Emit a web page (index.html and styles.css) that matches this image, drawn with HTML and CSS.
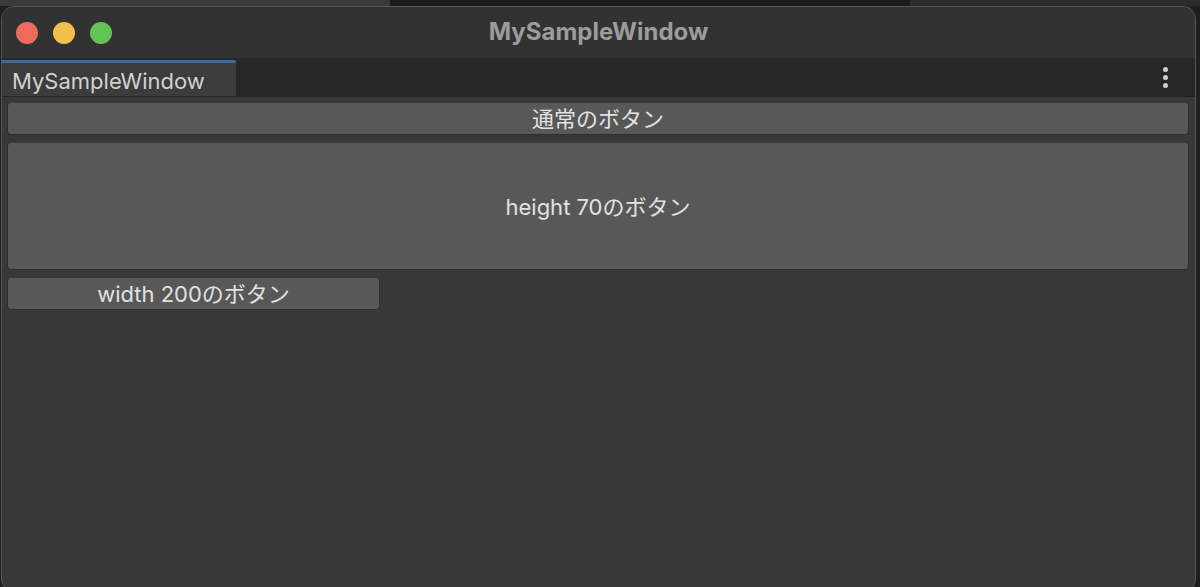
FILE: index.html
```html
<!DOCTYPE html>
<html lang="ja">
<head>
<meta charset="utf-8">
<title>MySampleWindow</title>
<link rel="stylesheet" href="styles.css">
</head>
<body>
<div class="backdrop">
  <div class="bg-strip"></div>
</div>
<div class="window">
  <div class="titlebar">
    <div class="lights">
      <span class="light red"></span>
      <span class="light yellow"></span>
      <span class="light green"></span>
    </div>
    <div class="title">MySampleWindow</div>
  </div>
  <div class="tabbar">
    <div class="tab">MySampleWindow</div>
    <div class="menu"><span></span><span></span><span></span></div>
  </div>
  <div class="content">
    <div class="btn">通常のボタン</div>
    <div class="btn tall">height 70のボタン</div>
    <div class="btn narrow">width 200のボタン</div>
  </div>
</div>
</body>
</html>
```
FILE: styles.css
```css
html, body {
  margin: 0;
  padding: 0;
  width: 1200px;
  height: 587px;
  overflow: hidden;
  background: #1f1f1f;
  font-family: "Inter", "Noto Sans CJK JP", sans-serif;
}
.backdrop {
  position: absolute;
  left: 0;
  top: 0;
  width: 1200px;
  height: 587px;
}
.bg-strip {
  height: 6px;
  background: linear-gradient(90deg, #3a3a3a 0 390px, #1c1c1c 390px 910px, #2c2c2c 910px);
}
.window {
  position: relative;
  margin-left: 1px;
  margin-top: 6px;
  width: 1193px;
  height: 584px;
  border: 1px solid #565656;
  border-radius: 13px;
  overflow: hidden;
  background: #383838;
  display: flex;
  flex-direction: column;
}
.titlebar {
  height: 51px;
  background: #323232;
  display: flex;
  align-items: center;
  position: relative;
}
.lights {
  display: flex;
  gap: 15px;
  padding-left: 14px;
}
.light {
  width: 22px;
  height: 22px;
  border-radius: 50%;
  display: block;
}
.light.red { background: #ec6a5e; }
.light.yellow { background: #f4bf4f; }
.light.green { background: #61c554; }
.title {
  position: absolute;
  left: 0;
  right: 0;
  top: 0;
  bottom: 0;
  display: flex;
  align-items: center;
  justify-content: center;
  color: #9c9c9c;
  font-weight: 700;
  font-size: 24px;
  padding-bottom: 2px;
}
.tabbar {
  height: 38px;
  background: #272727;
  display: flex;
  align-items: flex-end;
  justify-content: space-between;
  border-bottom: 1px solid #232323;
}
.tab {
  box-sizing: border-box;
  width: 234px;
  height: 36px;
  background: #3c3c3c;
  border-top: 3px solid #3b6aa0;
  border-top-right-radius: 2px;
  color: #d2d2d2;
  font-size: 22px;
  padding: 3px 0 0 10px;
  line-height: 30px;
}
.menu {
  align-self: center;
  display: flex;
  flex-direction: column;
  gap: 3px;
  margin-right: 27px;
}
.menu span {
  width: 5px;
  height: 5px;
  border-radius: 50%;
  background: #cfcfcf;
  display: block;
}
.content {
  flex: 1;
  padding: 5px 5px 0 5px;
  display: flex;
  flex-direction: column;
  gap: 7px;
  align-items: flex-start;
}
.btn {
  box-sizing: border-box;
  width: 1182px;
  height: 33px;
  background: #585858;
  border: 1px solid #2e2e2e;
  border-top-color: #3a3a3a;
  border-radius: 4px;
  color: #e2e2e2;
  font-size: 22px;
  padding-bottom: 3px;
  display: flex;
  align-items: center;
  justify-content: center;
}
.btn.tall {
  height: 128px;
}
.btn.narrow {
  width: 373px;
}
```
